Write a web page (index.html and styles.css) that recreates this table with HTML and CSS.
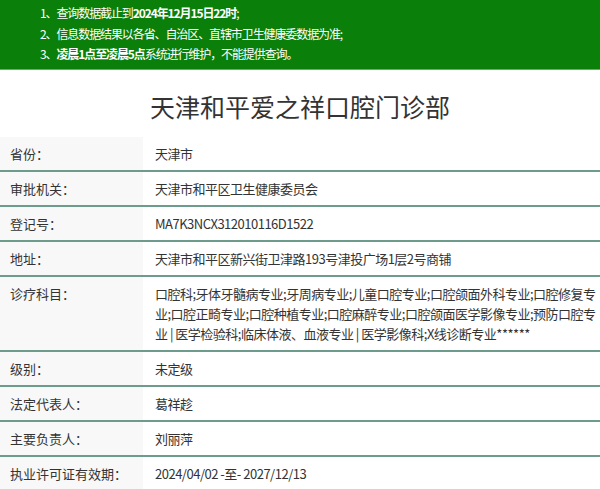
FILE: index.html
```html
<!DOCTYPE html>
<html lang="zh-CN">
<head>
<meta charset="utf-8">
<title>天津和平爱之祥口腔门诊部</title>
<link rel="stylesheet" href="styles.css">
</head>
<body>
<div class="notice">
  <p>1、查询数据截止到<b>2024年12月15日22时</b>;</p>
  <p>2、信息数据结果以各省、自治区、直辖市卫生健康委数据为准;</p>
  <p>3、<b>凌晨1点至凌晨5点</b>系统进行维护，不能提供查询。</p>
</div>
<h1 class="title">天津和平爱之祥口腔门诊部</h1>
<div class="info">
  <div class="row"><div class="label">省份：</div><div class="value">天津市</div></div>
  <div class="row"><div class="label">审批机关：</div><div class="value">天津市和平区卫生健康委员会</div></div>
  <div class="row"><div class="label">登记号：</div><div class="value">MA7K3NCX312010116D1522</div></div>
  <div class="row"><div class="label">地址：</div><div class="value">天津市和平区新兴街卫津路193号津投广场1层2号商铺</div></div>
  <div class="row"><div class="label">诊疗科目：</div><div class="value">口腔科;牙体牙髓病专业;牙周病专业;儿童口腔专业;口腔颌面外科专业;口腔修复专业;口腔正畸专业;口腔种植专业;口腔麻醉专业;口腔颌面医学影像专业;预防口腔专业 | 医学检验科;临床体液、血液专业 | 医学影像科;X线诊断专业******</div></div>
  <div class="row"><div class="label">级别：</div><div class="value">未定级</div></div>
  <div class="row"><div class="label">法定代表人：</div><div class="value">葛祥趁</div></div>
  <div class="row"><div class="label">主要负责人：</div><div class="value">刘丽萍</div></div>
  <div class="row"><div class="label">执业许可证有效期：</div><div class="value">2024/04/02 -至- 2027/12/13</div></div>
</div>
</body>
</html>
```
FILE: styles.css
```css
* { box-sizing: border-box; }
html, body { margin: 0; padding: 0; background: #fff; }
body {
  font-family: "Noto Sans CJK SC", "Noto Sans", "Liberation Sans", sans-serif;
  color: #333;
}
.notice {
  background: #0a800a;
  color: #fff;
  height: 70px;
  padding: 3px 0 0 40px;
  border-bottom: 1px solid #5fb35f;
  font-size: 12px;
  letter-spacing: -1.1px;
}
.notice p { margin: 0; line-height: 20.5px; }
.notice b { font-weight: bold; }
.title {
  margin: 0;
  height: 67px;
  padding-top: 18px;
  text-align: center;
  font-size: 25px;
  font-weight: normal;
  line-height: 36px;
  color: #333;
}
.info { display: flex; flex-direction: column; }
.row {
  display: flex;
  border-bottom: 2px solid #6e9c8c;
  font-size: 13px;
  line-height: 20px;
}
.label {
  flex: 0 0 143px;
  background: #f8f8f8;
  padding: 6.5px 10px;
}
.value {
  flex: 1;
  padding: 6.5px 0 6.5px 12px;
  letter-spacing: -0.5px;
}
```
